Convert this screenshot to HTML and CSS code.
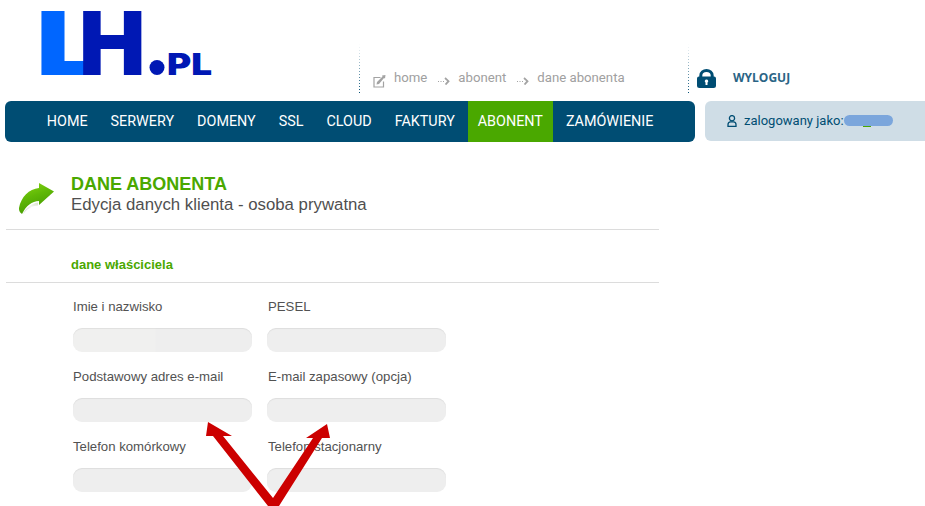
FILE: index.html
```html
<!DOCTYPE html>
<html lang="pl">
<head>
<meta charset="utf-8">
<title>Dane abonenta</title>
<link rel="stylesheet" href="styles.css">
</head>
<body>
<header class="top">
  <svg class="logo" width="172" height="66" viewBox="0 0 172 66">
    <text class="logo-l" x="-5" y="64" textLength="66" lengthAdjust="spacingAndGlyphs">L</text>
    <text class="logo-h" x="38" y="64" textLength="66.500" lengthAdjust="spacingAndGlyphs">H</text>
    <circle class="logo-dot" cx="116" cy="56.500" r="7.500"/>
    <text class="logo-pl" x="126" y="64" textLength="45" lengthAdjust="spacingAndGlyphs">PL</text>
  </svg>
  <nav class="crumbs">
    <svg class="crumb-edit" width="13" height="13" viewBox="0 0 13 13">
      <path d="M7.500 2.500H1v9.500h9.500V6.500" fill="none" stroke="#a3a3a3" stroke-width="1.200"/>
      <path d="M3.500 9.500 L4 7 L9.500 1.500 L9 0.500 L12.500 0 L12 3.500 L11 3 L6 9 Z" fill="#a3a3a3"/>
    </svg>
    <span class="crumb">home</span>
    <svg class="crumb-arrow" width="12" height="8" viewBox="0 0 12 8">
      <path d="M0 4.500h1M2.500 4.500h1M5 4.500h1" stroke="#a3a3a3" stroke-width="1.200"/>
      <path d="M7 1 L10.500 4.200 L7.500 7.500" fill="none" stroke="#a3a3a3" stroke-width="1.800"/>
    </svg>
    <span class="crumb">abonent</span>
    <svg class="crumb-arrow" width="12" height="8" viewBox="0 0 12 8">
      <path d="M0 4.500h1M2.500 4.500h1M5 4.500h1" stroke="#a3a3a3" stroke-width="1.200"/>
      <path d="M7 1 L10.500 4.200 L7.500 7.500" fill="none" stroke="#a3a3a3" stroke-width="1.800"/>
    </svg>
    <span class="crumb">dane abonenta</span>
  </nav>
  <div class="logout">
    <svg class="lock" width="19" height="19" viewBox="0 0 19 19">
      <path d="M3.800 9V6.500a5.700 5 0 0 1 11.400 0V9" fill="none" stroke="#004d73" stroke-width="3"/>
      <path fill-rule="evenodd" d="M2 7.500H17Q19 7.500 19 9.500V16.500Q19 19 16.500 19H2.500Q0 19 0 16.500V9.500Q0 7.500 2 7.500ZM9.500 10.500a1.700 1.700 0 0 0-1 3.100V16h2v-2.400A1.700 1.700 0 0 0 9.500 10.500Z" fill="#004d73"/>
    </svg>
    <a class="logout-link">WYLOGUJ</a>
  </div>
</header>

<div class="bar">
  <ul class="menu">
    <li class="menu-item">HOME</li>
    <li class="menu-item">SERWERY</li>
    <li class="menu-item">DOMENY</li>
    <li class="menu-item">SSL</li>
    <li class="menu-item">CLOUD</li>
    <li class="menu-item">FAKTURY</li>
    <li class="menu-item menu-item-active">ABONENT</li>
    <li class="menu-item">ZAMÓWIENIE</li>
  </ul>
  <div class="user">
    <svg class="user-icon" width="10" height="12" viewBox="0 0 10 12">
      <ellipse cx="5" cy="3.200" rx="2.600" ry="2.600" fill="none" stroke="#004d73" stroke-width="1.300"/>
      <path d="M1 11.300V9.500Q1 7 3.500 6.800H6.500Q9 7 9 9.500V11.300Z" fill="none" stroke="#004d73" stroke-width="1.300"/>
    </svg>
    <span class="user-text">zalogowany jako:</span>
    <span class="user-mask"></span>
  </div>
</div>

<main class="content">
  <div class="page-head">
    <svg class="head-icon" width="36" height="33" viewBox="0 0 36 33">
      <defs>
        <linearGradient id="arrowGreen" x1="0" y1="0" x2="0.400" y2="1">
          <stop offset="0" stop-color="#8ad816"/>
          <stop offset="0.500" stop-color="#5fb806"/>
          <stop offset="1" stop-color="#459a02"/>
        </linearGradient>
        <linearGradient id="arrowCurl" x1="0" y1="1" x2="1" y2="0">
          <stop offset="0" stop-color="#c9d2c4"/>
          <stop offset="0.600" stop-color="#f2f3f0"/>
          <stop offset="1" stop-color="#d7e4c8"/>
        </linearGradient>
      </defs>
      <path d="M3 31 C0 29 0 27 0 25 C2 14 10 6 20 5 L20 0 L35 8.500 L20 22 L20 18 C13 18 7 23 3 31Z" fill="url(#arrowGreen)"/>
      <path d="M4 31 C7 25 12 20.500 19 19.500 L19 22.500 C13 22.500 8 26 4 31Z" fill="url(#arrowCurl)"/>
    </svg>
    <div>
      <h1 class="page-title">DANE ABONENTA</h1>
      <p class="page-sub">Edycja danych klienta - osoba prywatna</p>
    </div>
  </div>
  <h2 class="section">dane właściciela</h2>
  <form class="fields">
    <div class="field"><label class="field-label">Imie i nazwisko</label><div class="field-input field-input-name"></div></div>
    <div class="field"><label class="field-label">PESEL</label><div class="field-input"></div></div>
    <div class="field"><label class="field-label">Podstawowy adres e-mail</label><div class="field-input"></div></div>
    <div class="field"><label class="field-label">E-mail zapasowy (opcja)</label><div class="field-input"></div></div>
    <div class="field"><label class="field-label">Telefon komórkowy</label><div class="field-input"></div></div>
    <div class="field"><label class="field-label">Telefon stacjonarny</label><div class="field-input"></div></div>
  </form>
</main>

<svg class="annotation" width="925" height="506" viewBox="0 0 925 506">
  <path d="M208 422 L232 436 L223 436 L273 498 L313 438 L306 438 L327 424 L330 438 L322 438 L279 506 L268 506 L213 436 L206 436 Z" fill="#cc0000"/>
</svg>
</body>
</html>
```
FILE: styles.css
```css
* { box-sizing: border-box; }
html, body { margin: 0; padding: 0; }
body {
  position: relative;
  width: 925px;
  height: 506px;
  overflow: hidden;
  background: #fff;
  font-family: "Liberation Sans", Arial, sans-serif;
}

.top { display: flex; height: 101px; }
.logo { margin: 11px 0 0 41px; flex: none; overflow: visible; }
.logo-l { font: 900 88px "Inter", "Liberation Sans", sans-serif; fill: #0066ff; }
.logo-h { font: 900 88px "Inter", "Liberation Sans", sans-serif; fill: #0018b4; }
.logo-dot { fill: #0018b4; }
.logo-pl { font: 900 30px "Inter", "Liberation Sans", sans-serif; fill: #0018b4; }

.crumbs {
  position: relative;
  display: flex;
  align-items: flex-start;
  width: 329px;
  margin-left: 146px;
  padding: 70px 0 0 14px;
  font: 13.200px/16px "Roboto", sans-serif;
  color: #a0a0a0;
}
.crumbs::before, .logout::before {
  content: "";
  position: absolute;
  left: 0;
  top: 44px;
  bottom: 7px;
  width: 1px;
  background: repeating-linear-gradient(to bottom, #004d73 0 1px, transparent 1px 3px);
  -webkit-mask-image: linear-gradient(to bottom, transparent, #000);
  mask-image: linear-gradient(to bottom, transparent, #000);
}
.crumb-edit { margin: 5px 8px 0 0; }
.crumb-arrow { margin: 7px 8px 0 11px; }
.logout {
  position: relative;
  flex: 1;
  display: flex;
  align-items: flex-start;
  padding: 69px 0 0 9px;
}
.lock { flex: none; }
.logout-link {
  margin: 1px 0 0 17px;
  font: 700 12px/16px "Open Sans", sans-serif;
  color: #2a6485;
}

.bar { display: flex; gap: 10px; padding-left: 5px; }
.menu {
  display: flex;
  width: 690px;
  height: 41px;
  margin: 0;
  padding: 0 0 0 30.300px;
  list-style: none;
  background: #004d73;
  border-radius: 6px;
}
.menu-item {
  margin: 0 1.500px;
  padding: 0 10px;
  font: 14.350px/41px "Roboto", sans-serif;
  color: #fff;
}
.menu-item-active { background: #4aa800; }
.user {
  flex: 1;
  display: flex;
  align-items: center;
  height: 40px;
  padding: 0 0 2px 22px;
  background: #cfdde6;
  border-radius: 6px 0 0 6px;
  font: 13px "Roboto", sans-serif;
  color: #004d73;
}
.user-icon { margin: 2px 7px 0 0; }
.user-mask {
  position: relative;
  width: 49px;
  height: 11px;
  background: #7ba6dc;
  border-radius: 6px;
}
.user-mask::after {
  content: "";
  position: absolute;
  left: 19px;
  bottom: -1px;
  width: 8px;
  height: 1px;
  background: #4aa800;
}

.content { width: 653px; margin-left: 6px; }
.page-head {
  display: flex;
  height: 88px;
  padding: 32px 0 0 13px;
  border-bottom: 1px solid #dcdcdc;
}
.head-icon { margin: 9px 16px 0 0; flex: none; }
.page-title {
  margin: 0;
  font: 700 18px/20px "Liberation Sans", sans-serif;
  color: #4aa800;
}
.page-sub {
  margin: 1px 0 0;
  font: 16.800px/20px "Liberation Sans", sans-serif;
  color: #4f4f4f;
}
.section {
  height: 53px;
  margin: 0;
  padding: 27px 0 0 65px;
  border-bottom: 1px solid #dcdcdc;
  font: 700 13px/16px "Liberation Sans", sans-serif;
  color: #4aa800;
}
.fields {
  display: grid;
  grid-template-columns: 179px 179px;
  column-gap: 15px;
  padding: 16px 0 0 67px;
}
.field { height: 70px; }
.field:nth-child(even) .field-label { padding-left: 1px; }
.field-label {
  display: block;
  height: 29px;
  font: 13.200px/16px "Liberation Sans", sans-serif;
  color: #525252;
}
.field-input {
  height: 24px;
  background: #eeeeee;
  border-radius: 9px;
  box-shadow: inset 0 1px 1px rgba(0, 0, 0, 0.07);
}
.field-input-name { background: linear-gradient(to right, #f0f0ef 82px, #eeeeee 83px); }
.annotation { position: absolute; left: 0; top: 0; pointer-events: none; }
```
